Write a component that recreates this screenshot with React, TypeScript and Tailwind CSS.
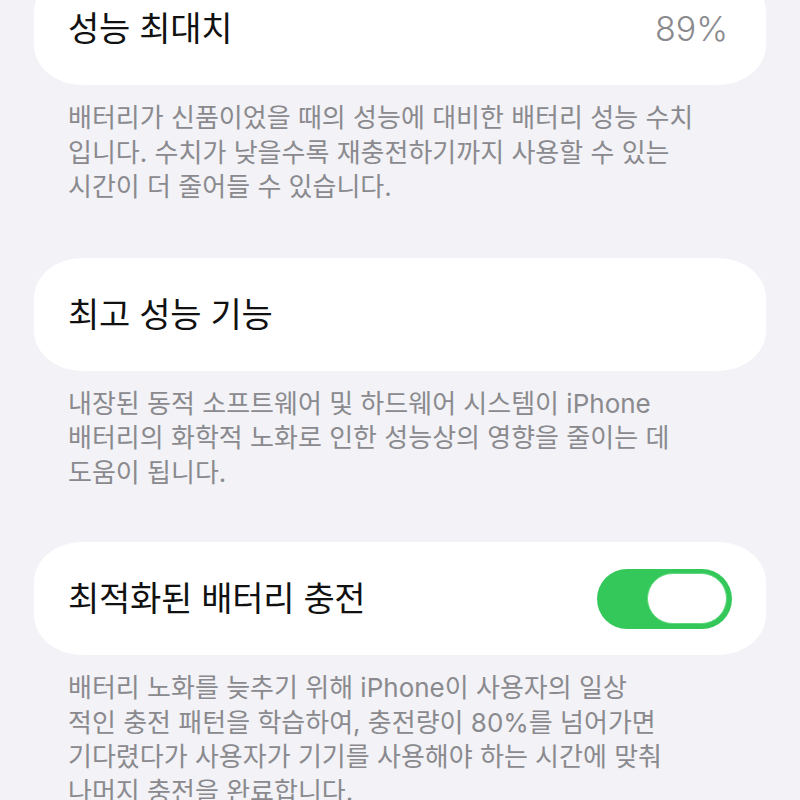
import React from "react";

const font = { fontFamily: '"Inter", "Noto Sans CJK KR", sans-serif' };

function Card({ children }: { children: React.ReactNode }) {
  return (
    <div className="mx-[34px] h-[113px] bg-white rounded-[48px_/_40px] flex items-center justify-between pl-[34px] pr-[34px]">
      {children}
    </div>
  );
}

function Desc({ lines }: { lines: string[] }) {
  return (
    <div className="mx-[68px] mt-[16px] text-[26px] leading-[34.5px] tracking-[0px] text-[#8a8a8e]">
      {lines.map((l, i) => (
        <div key={i} className="whitespace-nowrap">{l}</div>
      ))}
    </div>
  );
}

export default function App() {
  return (
    <div className="w-[800px] h-[800px] overflow-hidden bg-[#f2f2f7]" style={font}>
      <div className="flex flex-col -mt-[28px]">
        <Card>
          <span className="text-[34px] tracking-[-0.3px] text-[#111]">성능 최대치</span>
          <span className="text-[34px] tracking-[0px] text-[#8a8a8e] font-light pr-[4px]">89%</span>
        </Card>
        <Desc
          lines={[
            "배터리가 신품이었을 때의 성능에 대비한 배터리 성능 수치",
            "입니다. 수치가 낮을수록 재충전하기까지 사용할 수 있는",
            "시간이 더 줄어들 수 있습니다.",
          ]}
        />
        <div className="h-[53px]" />
        <Card>
          <span className="text-[34px] tracking-[-0.3px] text-[#111]">최고 성능 기능</span>
        </Card>
        <Desc
          lines={[
            "내장된 동적 소프트웨어 및 하드웨어 시스템이 iPhone",
            "배터리의 화학적 노화로 인한 성능상의 영향을 줄이는 데",
            "도움이 됩니다.",
          ]}
        />
        <div className="h-[52px]" />
        <Card>
          <span className="text-[34px] tracking-[-0.3px] text-[#111]">최적화된 배터리 충전</span>
          <div className="w-[135px] h-[60px] rounded-full bg-[#34c759] flex items-center justify-end pr-[5px]">
            <div className="w-[80px] h-[51px] rounded-full bg-white border-[1.5px] border-[#5fd97c]" />
          </div>
        </Card>
        <Desc
          lines={[
            "배터리 노화를 늦추기 위해 iPhone이 사용자의 일상",
            "적인 충전 패턴을 학습하여, 충전량이 80%를 넘어가면",
            "기다렸다가 사용자가 기기를 사용해야 하는 시간에 맞춰",
            "나머지 충전을 완료합니다.",
          ]}
        />
      </div>
    </div>
  );
}
